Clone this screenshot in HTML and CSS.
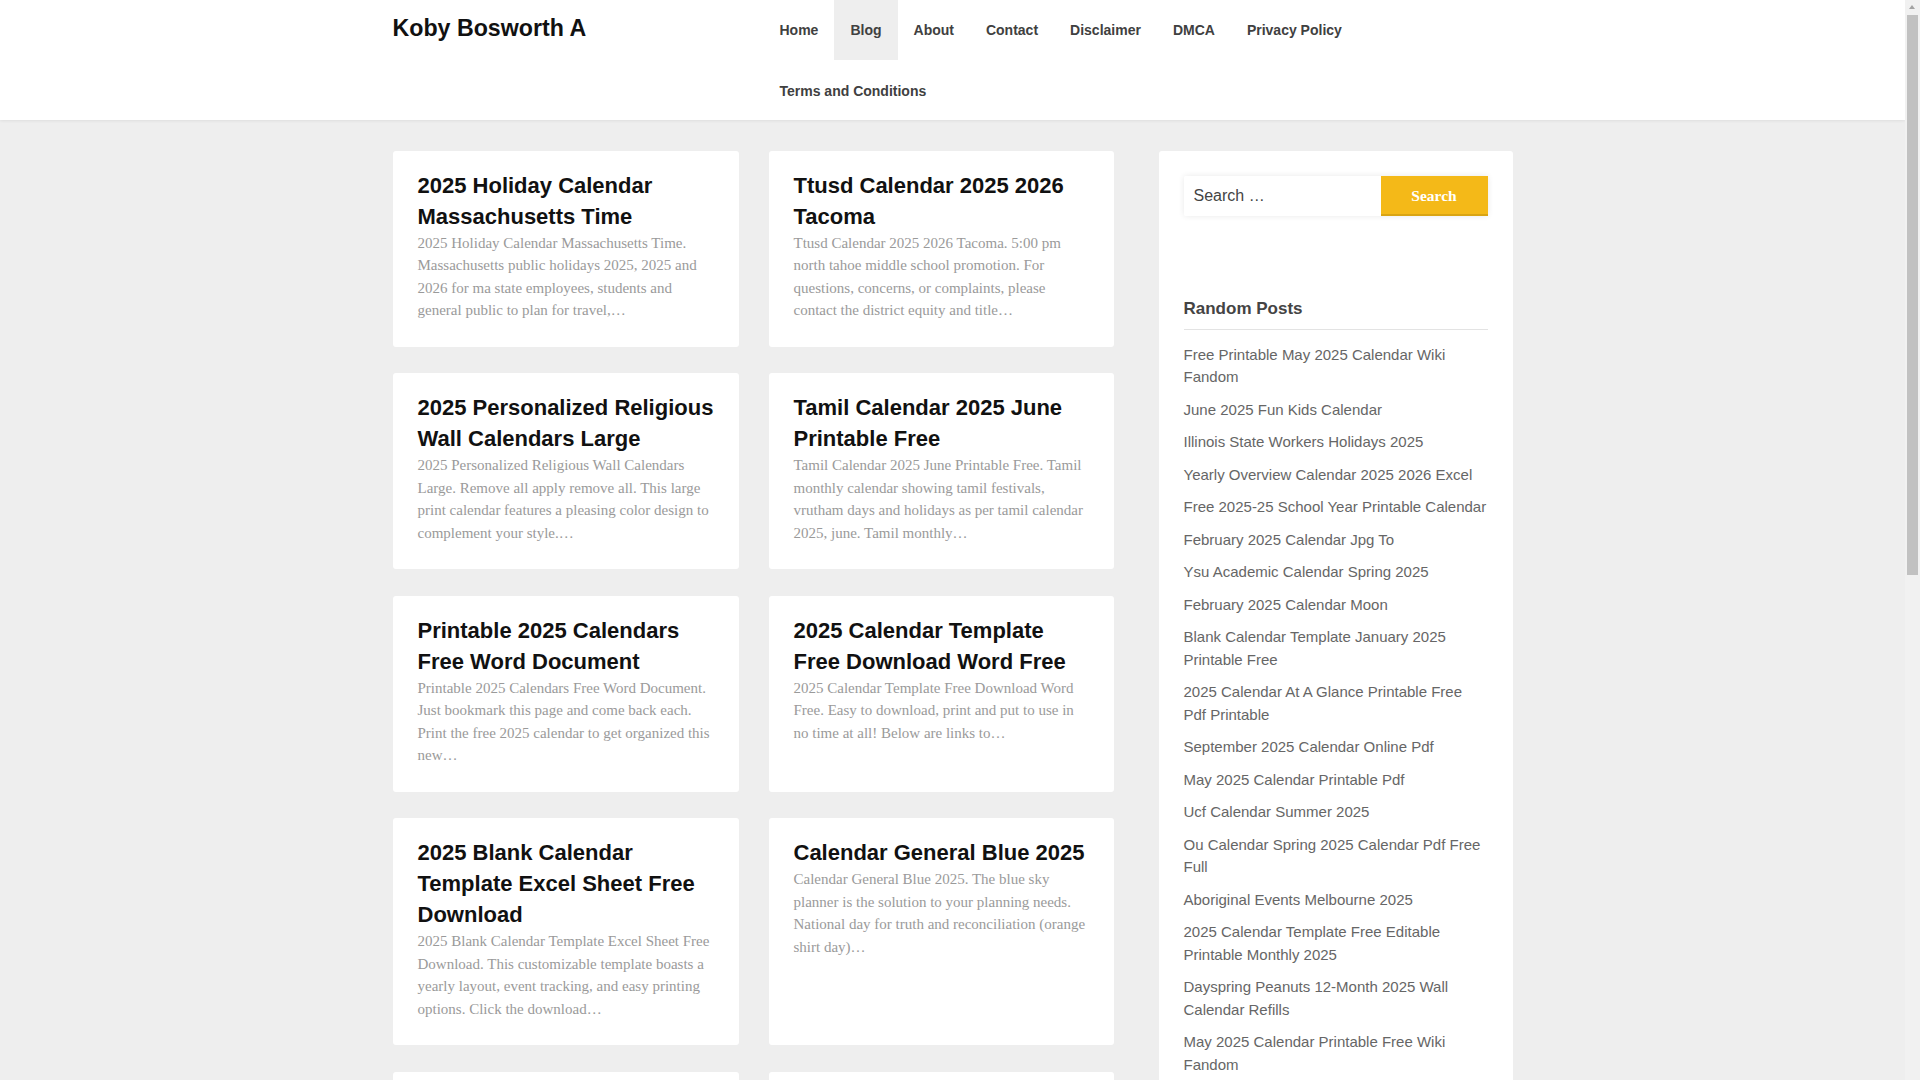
FILE: index.html
```html
<!DOCTYPE html>
<html lang="en">
<head>
<meta charset="utf-8">
<title>Koby Bosworth A</title>
<link rel="stylesheet" href="styles.css">
</head>
<body>
<header class="site-header">
  <div class="container header-inner">
    <div class="branding"><a class="site-title" href="#">Koby Bosworth A</a></div>
    <nav class="main-nav">
      <ul class="menu">
        <li><a href="#">Home</a></li>
        <li class="current"><a href="#">Blog</a></li>
        <li><a href="#">About</a></li>
        <li><a href="#">Contact</a></li>
        <li><a href="#">Disclaimer</a></li>
        <li><a href="#">DMCA</a></li>
        <li><a href="#">Privacy Policy</a></li>
        <li><a href="#">Terms and Conditions</a></li>
      </ul>
    </nav>
  </div>
</header>

<div class="container site-content">
  <main class="posts">
    <article class="card">
      <h2 class="card-title">2025 Holiday Calendar Massachusetts Time</h2>
      <p class="excerpt">2025 Holiday Calendar Massachusetts Time. Massachusetts public holidays 2025, 2025 and 2026 for ma state employees, students and general public to plan for travel,…</p>
    </article>
    <article class="card">
      <h2 class="card-title">Ttusd Calendar 2025 2026 Tacoma</h2>
      <p class="excerpt">Ttusd Calendar 2025 2026 Tacoma. 5:00 pm north tahoe middle school promotion. For questions, concerns, or complaints, please contact the district equity and title…</p>
    </article>
    <article class="card">
      <h2 class="card-title">2025 Personalized Religious Wall Calendars Large</h2>
      <p class="excerpt">2025 Personalized Religious Wall Calendars Large. Remove all apply remove all. This large print calendar features a pleasing color design to complement your style.…</p>
    </article>
    <article class="card">
      <h2 class="card-title">Tamil Calendar 2025 June Printable Free</h2>
      <p class="excerpt">Tamil Calendar 2025 June Printable Free. Tamil monthly calendar showing tamil festivals, vrutham days and holidays as per tamil calendar 2025, june. Tamil monthly…</p>
    </article>
    <article class="card">
      <h2 class="card-title">Printable 2025 Calendars Free Word Document</h2>
      <p class="excerpt">Printable 2025 Calendars Free Word Document. Just bookmark this page and come back each. Print the free 2025 calendar to get organized this new…</p>
    </article>
    <article class="card">
      <h2 class="card-title">2025 Calendar Template Free Download Word Free</h2>
      <p class="excerpt">2025 Calendar Template Free Download Word Free. Easy to download, print and put to use in no time at all! Below are links to…</p>
    </article>
    <article class="card">
      <h2 class="card-title">2025 Blank Calendar Template Excel Sheet Free Download</h2>
      <p class="excerpt">2025 Blank Calendar Template Excel Sheet Free Download. This customizable template boasts a yearly layout, event tracking, and easy printing options. Click the download…</p>
    </article>
    <article class="card">
      <h2 class="card-title">Calendar General Blue 2025</h2>
      <p class="excerpt">Calendar General Blue 2025. The blue sky planner is the solution to your planning needs. National day for truth and reconciliation (orange shirt day)…</p>
    </article>
    <article class="card">
      <h2 class="card-title">2025 Calendar Printable Free Monthly</h2>
      <p class="excerpt">2025 Calendar Printable Free Monthly. Download and print these free monthly calendars for home, school or office use…</p>
    </article>
    <article class="card">
      <h2 class="card-title">Calendar 2025 With Holidays Uk</h2>
      <p class="excerpt">Calendar 2025 With Holidays Uk. View the bank holidays and public holidays for the whole year at a glance…</p>
    </article>
  </main>

  <aside class="sidebar">
    <form class="search-form">
      <input class="search-field" type="search" placeholder="Search …">
      <button class="search-submit" type="button">Search</button>
    </form>
    <section class="widget">
      <h3 class="widget-title">Random Posts</h3>
      <ul class="widget-list">
        <li><a href="#">Free Printable May 2025 Calendar Wiki Fandom</a></li>
        <li><a href="#">June 2025 Fun Kids Calendar</a></li>
        <li><a href="#">Illinois State Workers Holidays 2025</a></li>
        <li><a href="#">Yearly Overview Calendar 2025 2026 Excel</a></li>
        <li><a href="#">Free 2025-25 School Year Printable Calendar</a></li>
        <li><a href="#">February 2025 Calendar Jpg To</a></li>
        <li><a href="#">Ysu Academic Calendar Spring 2025</a></li>
        <li><a href="#">February 2025 Calendar Moon</a></li>
        <li><a href="#">Blank Calendar Template January 2025 Printable Free</a></li>
        <li><a href="#">2025 Calendar At A Glance Printable Free Pdf Printable</a></li>
        <li><a href="#">September 2025 Calendar Online Pdf</a></li>
        <li><a href="#">May 2025 Calendar Printable Pdf</a></li>
        <li><a href="#">Ucf Calendar Summer 2025</a></li>
        <li><a href="#">Ou Calendar Spring 2025 Calendar Pdf Free Full</a></li>
        <li><a href="#">Aboriginal Events Melbourne 2025</a></li>
        <li><a href="#">2025 Calendar Template Free Editable Printable Monthly 2025</a></li>
        <li><a href="#">Dayspring Peanuts 12-Month 2025 Wall Calendar Refills</a></li>
        <li><a href="#">May 2025 Calendar Printable Free Wiki Fandom</a></li>
      </ul>
    </section>
  </aside>
</div>

<div class="fake-scrollbar" aria-hidden="true">
  <span class="scroll-arrow"></span>
  <span class="scroll-thumb"></span>
</div>
</body>
</html>
```

FILE: styles.css
```css
* { box-sizing: border-box; }

html, body {
  margin: 0;
  padding: 0;
}

body {
  background: #eeeeee;
  font-family: "Liberation Sans", Arial, sans-serif;
  color: #444;
  padding-right: 15px;
}

a { text-decoration: none; color: inherit; }

.container {
  width: 1120px;
  margin: 0 auto;
}

/* Header */
.site-header {
  background: #ffffff;
  box-shadow: 0 1px 3px rgba(0, 0, 0, 0.07);
  position: relative;
  z-index: 1;
}

.header-inner {
  display: flex;
  align-items: flex-start;
  height: 120px;
}

.branding {
  width: 371px;
  flex: none;
}

.site-title {
  display: block;
  font-size: 23.2px;
  font-weight: bold;
  line-height: 56px;
  color: #111111;
}

.main-nav {
  flex: 1;
}

.menu {
  list-style: none;
  margin: 0;
  padding: 0;
  display: flex;
  flex-wrap: wrap;
}

.menu a {
  display: block;
  padding: 0 16px;
  line-height: 60px;
  font-size: 14px;
  font-weight: bold;
  color: #404040;
}

.menu li:nth-child(8) a {
  line-height: 62px;
}

.menu .current a {
  background: #eeeeee;
}

/* Content */
.site-content {
  display: grid;
  grid-template-columns: 721px 354px;
  column-gap: 45px;
  align-items: start;
  padding-top: 30.5px;
}

.posts {
  display: grid;
  grid-template-columns: 346px 345px;
  column-gap: 30px;
  row-gap: 26.5px;
}

.card {
  background: #ffffff;
  border-radius: 3px;
  padding: 19px 23px 25px 25px;
}

.card-title {
  margin: 0;
  font-size: 22px;
  line-height: 31px;
  font-weight: bold;
  color: #111111;
}

.excerpt {
  margin: 0;
  font-family: "Liberation Serif", "Times New Roman", serif;
  font-size: 15px;
  line-height: 22.5px;
  color: #9a9a9a;
}

/* Sidebar */
.sidebar {
  background: #ffffff;
  border-radius: 3px;
  padding: 25px 25px 30px 25px;
}

.search-form {
  display: flex;
  height: 40px;
  box-shadow: 0 0 6px rgba(0, 0, 0, 0.09);
  border-radius: 2px;
  margin-bottom: 82px;
}

.search-field {
  width: 197px;
  flex: none;
  height: 40px;
  border: 0;
  padding: 0 10px;
  font-family: "Liberation Sans", Arial, sans-serif;
  font-size: 16px;
  color: #444;
  background: #fff;
  outline: none;
  border-radius: 2px 0 0 2px;
}

.search-field::placeholder {
  color: #444;
  opacity: 1;
}

.search-submit {
  flex: 1;
  height: 40px;
  border: 0;
  border-bottom: 2px solid #d9a412;
  background: #f4b918;
  color: #ffffff;
  font-family: "Liberation Serif", "Times New Roman", serif;
  font-weight: bold;
  font-size: 15.5px;
  padding: 2px 0 0 0;
  cursor: pointer;
}

.widget-title {
  margin: 0;
  font-size: 17px;
  line-height: 22px;
  font-weight: bold;
  color: #444444;
  padding-bottom: 9px;
  border-bottom: 1px solid #e3e3e3;
}

.widget-list {
  list-style: none;
  margin: 14px 0 0 0;
  padding: 0;
  display: flex;
  flex-direction: column;
  gap: 10px;
}

.widget-list a {
  display: block;
  font-size: 15px;
  line-height: 22.5px;
  color: #666666;
}

/* Browser scrollbar as in the capture */
.fake-scrollbar {
  position: fixed;
  top: 0;
  right: 0;
  width: 15px;
  height: 100vh;
  background: #f1f1f1;
  z-index: 10;
}

.scroll-arrow {
  position: absolute;
  top: 5px;
  left: 4px;
  width: 0;
  height: 0;
  border-left: 3.5px solid transparent;
  border-right: 3.5px solid transparent;
  border-bottom: 4px solid #a3a3a3;
}

.scroll-thumb {
  position: absolute;
  top: 15px;
  left: 2px;
  width: 11px;
  height: 560px;
  background: #c1c1c1;
}
```
